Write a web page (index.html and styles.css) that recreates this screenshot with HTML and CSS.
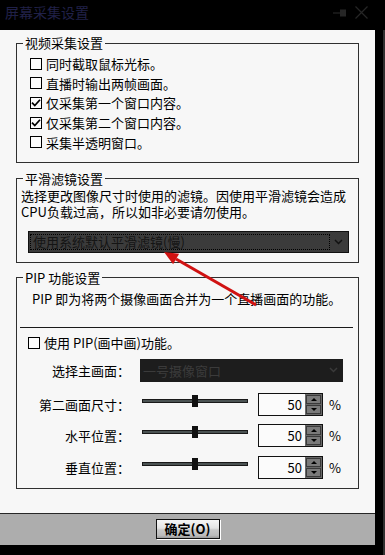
FILE: index.html
```html
<!DOCTYPE html>
<html lang="zh-CN">
<head>
    <meta charset="UTF-8">
    <meta name="viewport" content="width=device-width, initial-scale=1.0">
    <title>屏幕采集设置</title>
    <link rel="stylesheet" href="styles.css">
</head>
<body>
    <div class="window">
        <div class="titlebar">
            <span class="title">屏幕采集设置</span>
            <span class="title-icons">
                <svg class="pin" width="14" height="8" viewBox="0 0 14 8"><path d="M0 4H7" stroke="#262626" stroke-width="1.2"/><rect x="7" y="0.5" width="6" height="7" fill="#262626"/></svg>
                <svg class="close" width="13" height="13" viewBox="0 0 13 13"><path d="M0.5 0.5L12.5 12.5M12.5 0.5L0.5 12.5" stroke="#262626" stroke-width="1.2"/></svg>
            </span>
        </div>
        <div class="frame">
            <div class="dialog">
                <div class="content">
                    <fieldset class="group group-video">
                        <legend>视频采集设置</legend>
                        <div class="group-body">
                            <label class="check"><span class="box"></span>同时截取鼠标光标。</label>
                            <label class="check"><span class="box"></span>直播时输出两帧画面。</label>
                            <label class="check"><span class="box"><svg width="10" height="10" viewBox="0 0 10 10"><path d="M1 4.6L3.8 7.6L9 1.8" fill="none" stroke="#000" stroke-width="1.7"/></svg></span>仅采集第一个窗口内容。</label>
                            <label class="check"><span class="box"><svg width="10" height="10" viewBox="0 0 10 10"><path d="M1 4.6L3.8 7.6L9 1.8" fill="none" stroke="#000" stroke-width="1.7"/></svg></span>仅采集第二个窗口内容。</label>
                            <label class="check"><span class="box"></span>采集半透明窗口。</label>
                        </div>
                    </fieldset>

                    <fieldset class="group group-filter">
                        <legend>平滑滤镜设置</legend>
                        <div class="group-body">
                            <p class="desc">选择更改图像尺寸时使用的滤镜。因使用平滑滤镜会造成<br>CPU负载过高，所以如非必要请勿使用。</p>
                            <div class="combo combo-filter">
                                <span class="combo-text">使用系统默认平滑滤镜(慢)</span>
                                <svg width="9" height="6" viewBox="0 0 9 6"><path d="M1 1L4.5 4.5L8 1" fill="none" stroke="#111" stroke-width="1.5"/></svg>
                            </div>
                        </div>
                    </fieldset>

                    <fieldset class="group group-pip">
                        <legend>PIP 功能设置</legend>
                        <div class="group-body">
                            <p class="pip-desc">PIP 即为将两个摄像画面合并为一个直播画面的功能。</p>
                            <div class="sep"></div>
                            <label class="check pip-check"><span class="box"></span>使用 PIP(画中画)功能。</label>
                            <div class="pip-row">
                                <span class="row-label">选择主画面：</span>
                                <div class="combo combo-main">
                                    <span>一号摄像窗口</span>
                                    <svg width="9" height="6" viewBox="0 0 9 6"><path d="M1 1L4.5 4.5L8 1" fill="none" stroke="#3a3a3a" stroke-width="1.5"/></svg>
                                </div>
                            </div>
                            <div class="pip-row slider-row">
                                <span class="row-label">第二画面尺寸：</span>
                                <div class="slider"><span class="track"></span><span class="thumb" style="left: 50px"></span></div>
                                <div class="spin"><span class="spin-value">50</span><span class="spin-btns"><span class="spin-btn up"></span><span class="spin-btn down"></span></span></div>
                                <span class="unit">%</span>
                            </div>
                            <div class="pip-row slider-row">
                                <span class="row-label">水平位置：</span>
                                <div class="slider"><span class="track"></span><span class="thumb" style="left: 50px"></span></div>
                                <div class="spin"><span class="spin-value">50</span><span class="spin-btns"><span class="spin-btn up"></span><span class="spin-btn down"></span></span></div>
                                <span class="unit">%</span>
                            </div>
                            <div class="pip-row slider-row">
                                <span class="row-label">垂直位置：</span>
                                <div class="slider"><span class="track"></span><span class="thumb" style="left: 50px"></span></div>
                                <div class="spin"><span class="spin-value">50</span><span class="spin-btns"><span class="spin-btn up"></span><span class="spin-btn down"></span></span></div>
                                <span class="unit">%</span>
                            </div>
                        </div>
                    </fieldset>
                </div>
                <div class="footer">
                    <button class="ok">确定(O)</button>
                </div>
            </div>
            <div class="edge"></div>
        </div>

        <!-- red pointer drawn over the dialog -->
        <svg class="pointer" width="102" height="64" viewBox="0 0 102 64">
            <path d="M18 13L98 59" stroke="#d01212" stroke-width="3"/>
            <polygon points="6,6 15.1,18.2 21.1,7.8" fill="#d01212"/>
        </svg>
    </div>
</body>
</html>
```

FILE: styles.css
```css
* {
    box-sizing: border-box;
}
body {
    margin: 0;
    background-color: #000000;
    font-family: "Noto Sans CJK SC", "Noto Sans", sans-serif;
    font-size: 13px;
    color: #000000;
}
.window {
    position: relative;
    width: 385px;
    height: 555px;
    display: flex;
    flex-direction: column;
    overflow: hidden;
    background-color: #000000;
}
.titlebar {
    height: 30px;
    display: flex;
    justify-content: space-between;
    padding: 4px 0 0 5px;
    flex: none;
}
.title {
    color: #202048;
    font-size: 14px;
    line-height: 16px;
}
.title-icons {
    display: flex;
    align-items: flex-start;
    gap: 8px;
    padding: 2px 17px 0 0;
}
.pin {
    margin-top: 3px;
}
.frame {
    display: flex;
    flex: 1;
}
.dialog {
    width: 375px;
    display: flex;
    flex-direction: column;
}
.content {
    height: 483px;
    background-color: #f7f7f7;
    padding-top: 6px;
}
.footer {
    height: 32px;
    background-color: #adadad;
    border-top: 1px solid #262626;
    display: flex;
    justify-content: center;
    padding-top: 5px;
}
.edge {
    flex: 1;
    border-right: 2px solid #303030;
}

/* group boxes */
.group {
    margin: 0 0 0 16px;
    width: 343px;
    padding: 0;
    border: 1px solid #303030;
    min-width: 0;
}
.group legend {
    margin-left: 6px;
    padding: 0 2px;
    font-size: 13px;
    line-height: 14px;
}
.group-video .group-body {
    padding: 4px 0 10px 13px;
}
.group-filter {
    margin-top: 9px;
}
.group-filter .group-body {
    padding: 2px 4px 9px 4px;
}
.group-pip {
    margin-top: 8px;
}
.group-pip .group-body {
    padding: 6px 0 9px 0;
}
.check {
    display: flex;
    align-items: center;
    height: 19.6px;
}
.box {
    width: 12px;
    height: 12px;
    border: 1px solid #000000;
    background-color: #fdfdfd;
    margin-right: 4px;
    flex: none;
    display: flex;
    align-items: center;
    justify-content: center;
}
.desc, .pip-desc {
    margin: 0;
    line-height: 16px;
}
.pip-desc {
    padding-left: 15px;
}

/* combo boxes */
.combo {
    height: 22px;
    display: flex;
    align-items: center;
    justify-content: space-between;
}
.combo-filter {
    margin: 11px 0 0 7px;
    width: 321px;
    background-color: #3b3b3b;
    border: 1px solid #111111;
    padding: 0 5px 0 1px;
    color: #141414;
}
.combo-text {
    width: 300px;
    height: 16px;
    line-height: 14px;
    border: 1px dotted #000000;
    padding-left: 2px;
}
.combo-main {
    height: 23px;
    width: 203px;
    margin-left: 10px;
    background-color: #1d1d1d;
    padding: 0 5px 0 3px;
    color: #3b3b3b;
}

/* pip rows */
.sep {
    margin: 20px 0 0 3px;
    width: 333px;
    height: 1px;
    background-color: #1a1a1a;
}
.pip-check {
    padding-left: 11px;
    margin-top: 5px;
    height: 20px;
}
.pip-row {
    display: flex;
    align-items: center;
    height: 23px;
    margin-top: 6px;
}
.slider-row {
    margin-top: 8.5px;
}
.slider-row:nth-child(5) {
    margin-top: 11px;
}
.row-label {
    width: 113px;
    text-align: right;
    flex: none;
}
.slider {
    position: relative;
    width: 106px;
    height: 12px;
    margin-left: 12px;
    align-self: flex-start;
    margin-top: 2px;
}
.track {
    display: block;
    margin-top: 4px;
    height: 4px;
    background-color: #4b5353;
    border: 1px solid #1a1a1a;
}
.thumb {
    position: absolute;
    top: 0;
    width: 6px;
    height: 12px;
    background-color: #111111;
}
.spin {
    margin-left: 10px;
    width: 65px;
    height: 23px;
    border: 1px solid #111111;
    background-color: #fbfbfb;
    display: flex;
}
.spin-value {
    flex: 1;
    text-align: right;
    padding-right: 3px;
    line-height: 21px;
}
.spin-btns {
    width: 17px;
    background-color: #686868;
    display: flex;
    flex-direction: column;
    justify-content: space-between;
    padding: 1px 1px;
}
.spin-btn {
    height: 9px;
    border: 1px solid #3a3a3a;
    background-color: #7a7a7a;
    display: flex;
    align-items: center;
    justify-content: center;
}
.spin-btn::after {
    content: "";
    border-left: 3px solid transparent;
    border-right: 3px solid transparent;
}
.spin-btn.up::after {
    border-bottom: 3px solid #000000;
}
.spin-btn.down::after {
    border-top: 3px solid #000000;
}
.unit {
    margin-left: 6px;
}

/* footer button */
.ok {
    width: 64px;
    height: 20px;
    padding: 0;
    border: 1px solid #111111;
    box-shadow: 1px 1px 0 #ffffff;
    background: linear-gradient(#f6f6f6 0, #e4e4e4 45%, #c8c8c8 55%, #bcbcbc 85%, #9c9c9c 100%);
    font-family: "Noto Sans CJK SC", sans-serif;
    font-size: 13px;
    font-weight: 700;
    line-height: 18px;
    color: #000000;
}

.pointer {
    position: absolute;
    left: 158px;
    top: 246px;
}
```
